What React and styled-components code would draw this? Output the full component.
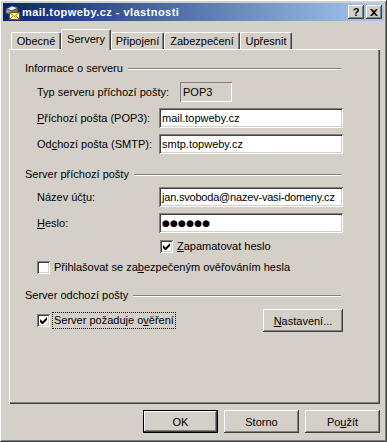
import * as React from 'react';
import styled, { createGlobalStyle } from 'styled-components';

const Global = createGlobalStyle`
  html, body {
    margin: 0;
    padding: 0;
    background: #d4d0c8;
  }
  * {
    box-sizing: border-box;
  }
`;

const raised = `
  box-shadow: inset -1px -1px #404040, inset 1px 1px #ffffff,
    inset -2px -2px #808080, inset 2px 2px #d4d0c8;
`;

const sunken = `
  box-shadow: inset 1px 1px #808080, inset -1px -1px #ffffff,
    inset 2px 2px #404040, inset -2px -2px #d4d0c8;
`;

const Window = styled.div`
  width: 387px;
  height: 442px;
  padding: 3px;
  background: #d4d0c8;
  font-family: "Liberation Sans", Arial, sans-serif;
  font-size: 11px;
  color: #000;
  ${raised}
  display: flex;
  flex-direction: column;
`;

const TitleBar = styled.div`
  height: 18px;
  display: flex;
  align-items: center;
  padding: 0 2px;
  background: linear-gradient(to right, #0a246a, #a6caf0);
`;

const TitleIcon = styled.svg`
  width: 16px;
  height: 16px;
  flex: none;
`;

const TitleText = styled.div`
  flex: 1;
  margin-left: 1px;
  color: #fff;
  font-weight: bold;
  letter-spacing: 0.45px;
  white-space: nowrap;
`;

const CaptionButton = styled.div`
  width: 16px;
  height: 14px;
  margin-left: ${({ $gap }) => $gap || 0}px;
  display: flex;
  align-items: center;
  justify-content: center;
  background: #d4d0c8;
  font-weight: bold;
  font-size: 11px;
  line-height: 14px;
  ${raised}
`;

const Body = styled.div`
  flex: 1;
  padding: 8px 0 0 6px;
  display: flex;
  flex-direction: column;
`;

const TabRow = styled.div`
  height: 20px;
  display: flex;
  align-items: flex-end;
  padding-left: 2px;
  position: relative;
  z-index: 1;
`;

const Tab = styled.div`
  width: ${({ $w }) => $w}px;
  height: ${({ $active }) => ($active ? 21 : 17)}px;
  margin-bottom: ${({ $active }) => ($active ? -1 : 0)}px;
  padding-top: ${({ $active }) => ($active ? 3 : 2)}px;
  text-align: center;
  line-height: 13px;
  background: #d4d0c8;
  border-left: 1px solid #fff;
  border-top: 1px solid #fff;
  border-right: 1px solid #404040;
  border-radius: 2px 2px 0 0;
  box-shadow: inset -1px 0 #808080;
  white-space: nowrap;
`;

const Panel = styled.div`
  width: 371px;
  height: 355px;
  padding: 13px 0 0 16px;
  background: #d4d0c8;
  box-shadow: inset 1px 1px #ffffff, inset -1px -1px #404040,
    inset -2px -2px #808080;
`;

const Group = styled.div`
  width: 318px;
  margin-top: ${({ $top }) => $top || 0}px;
`;

const GroupHeader = styled.div`
  height: 13px;
  line-height: 13px;
  display: flex;
  align-items: center;
`;

const GroupLine = styled.div`
  flex: 1;
  margin: 0 2px 0 5px;
  border-top: 1px solid #808080;
  border-bottom: 1px solid #fff;
`;

const FieldRow = styled.div`
  display: grid;
  grid-template-columns: 122px 184px;
  align-items: center;
  margin: ${({ $top }) => $top || 6}px 0 0 12px;
  height: 20px;
`;

const Label = styled.div`
  white-space: nowrap;
`;

const Input = styled.div`
  height: 20px;
  width: ${({ $w }) => ($w ? `${$w}px` : '100%')};
  margin-left: ${({ $ml }) => $ml || 0}px;
  padding: 0 3px;
  display: flex;
  align-items: center;
  white-space: nowrap;
  overflow: hidden;
  letter-spacing: ${({ $tight }) => ($tight ? '-0.2px' : 'normal')};
  background: ${({ $readOnly }) => ($readOnly ? '#d4d0c8' : '#fff')};
  ${({ $readOnly }) =>
    $readOnly
      ? 'box-shadow: inset 1px 1px #808080, inset -1px -1px #ffffff;'
      : sunken}
`;

const Dots = styled.span`
  font-family: "DejaVu Sans", sans-serif;
  font-size: 9px;
  letter-spacing: 0.2px;
`;

const CheckRow = styled.div`
  display: flex;
  align-items: center;
  height: ${({ $h }) => $h || 13}px;
  margin: ${({ $top }) => $top || 0}px 0 0 ${({ $left }) => $left || 12}px;
`;

const Box = styled.div`
  width: 13px;
  height: 13px;
  flex: none;
  background: #fff;
  ${sunken}
  display: flex;
  align-items: center;
  justify-content: center;
`;

const CheckText = styled.span`
  margin-left: ${({ $focus }) => ($focus ? 3 : 4)}px;
  padding: ${({ $focus }) => ($focus ? '1px 1px' : 0)};
  outline: ${({ $focus }) => ($focus ? '1px dotted #000' : 'none')};
  white-space: nowrap;
  line-height: 13px;
`;

const Button = styled.div`
  width: ${({ $w }) => $w || 75}px;
  height: 23px;
  flex: none;
  display: flex;
  align-items: center;
  justify-content: center;
  background: #d4d0c8;
  ${({ $default }) =>
    $default
      ? `border: 1px solid #000;
         box-shadow: inset -1px -1px #404040, inset 1px 1px #ffffff,
           inset -2px -2px #808080;`
      : raised}
`;

const Spacer = styled.div`
  flex: 1;
`;

const Footer = styled.div`
  display: flex;
  justify-content: flex-end;
  gap: 6px;
  width: 371px;
  margin-top: 6px;
`;

const Check = () => (
  <svg width="7" height="7" viewBox="0 0 7 7">
    <path d="M0 2v3l2 2h1l4-4V0L2.5 4.5z" fill="#000" />
  </svg>
);

const CheckBox = ({ checked }) => <Box>{checked && <Check />}</Box>;

const MailIcon = () => (
  <TitleIcon viewBox="0 0 16 16">
    <path d="M1 5 L7 2 L13 4 L7 7 Z" fill="#e8e8e8" stroke="#404040" strokeWidth="0.6" />
    <path d="M1 5 L7 7 L7 11 L1 9 Z" fill="#a0a0a0" stroke="#404040" strokeWidth="0.6" />
    <path d="M7 7 L13 4 L13 7 L7 11 Z" fill="#707070" stroke="#404040" strokeWidth="0.6" />
    <rect x="4.5" y="8.5" width="10" height="7" fill="#fff59a" stroke="#806000" strokeWidth="1" />
    <path d="M4.5 8.5 L9.5 12.5 L14.5 8.5 M4.5 15.5 L8 12 M14.5 15.5 L11 12" fill="none" stroke="#806000" strokeWidth="0.8" />
  </TitleIcon>
);

const CloseGlyph = () => (
  <svg width="8" height="7" viewBox="0 0 8 7">
    <path d="M0 0h2l2 2 2-2h2L5 3.5 8 7H6L4 5 2 7H0l3-3.5z" fill="#000" />
  </svg>
);

const tabs = [
  { label: 'Obecné', w: 50 },
  { label: 'Servery', w: 50, active: true },
  { label: 'Připojení', w: 53 },
  { label: 'Zabezpečení', w: 76 },
  { label: 'Upřesnit', w: 52 },
];

const App = () => (
  <Window>
    <Global />
    <TitleBar>
      <MailIcon />
      <TitleText>mail.topweby.cz - vlastnosti</TitleText>
      <CaptionButton>?</CaptionButton>
      <CaptionButton $gap={2}>
        <CloseGlyph />
      </CaptionButton>
    </TitleBar>
    <Body>
      <TabRow>
        {tabs.map((t) => (
          <Tab key={t.label} $w={t.w} $active={t.active}>
            {t.label}
          </Tab>
        ))}
      </TabRow>
      <Panel>
        <Group>
          <GroupHeader>
            Informace o serveru
            <GroupLine />
          </GroupHeader>
          <FieldRow $top={7}>
            <Label>Typ serveru příchozí pošty:</Label>
            <Input $readOnly $w={52} $ml={21}>POP3</Input>
          </FieldRow>
          <FieldRow>
            <Label>
              <u>P</u>říchozí pošta (POP3):
            </Label>
            <Input>mail.topweby.cz</Input>
          </FieldRow>
          <FieldRow>
            <Label>
              Od<u>c</u>hozí pošta (SMTP):
            </Label>
            <Input>smtp.topweby.cz</Input>
          </FieldRow>
        </Group>

        <Group $top={14}>
          <GroupHeader>
            Server příchozí pošty
            <GroupLine />
          </GroupHeader>
          <FieldRow>
            <Label>
              Název úč<u>t</u>u:
            </Label>
            <Input $tight>jan.svoboda@nazev-vasi-domeny.cz</Input>
          </FieldRow>
          <FieldRow>
            <Label>
              <u>H</u>eslo:
            </Label>
            <Input>
              <Dots>●●●●●●</Dots>
            </Input>
          </FieldRow>
          <CheckRow $top={7} $left={135}>
            <CheckBox checked />
            <CheckText>
              <u>Z</u>apamatovat heslo
            </CheckText>
          </CheckRow>
          <CheckRow $top={8}>
            <CheckBox />
            <CheckText>
              Přihlašovat se za<u>b</u>ezpečeným ověřováním hesla
            </CheckText>
          </CheckRow>
        </Group>

        <Group $top={15}>
          <GroupHeader>
            Server odchozí pošty
            <GroupLine />
          </GroupHeader>
          <CheckRow $top={7} $h={23}>
            <CheckBox checked />
            <CheckText $focus>
              Server požaduje o<u>v</u>ěření
            </CheckText>
            <Spacer />
            <Button $w={80}>
              <span>
                <u>N</u>astavení...
              </span>
            </Button>
          </CheckRow>
        </Group>
      </Panel>
      <Footer>
        <Button $default>OK</Button>
        <Button>Storno</Button>
        <Button>
          <span>
            Po<u>u</u>žít
          </span>
        </Button>
      </Footer>
    </Body>
  </Window>
);

export default App;
